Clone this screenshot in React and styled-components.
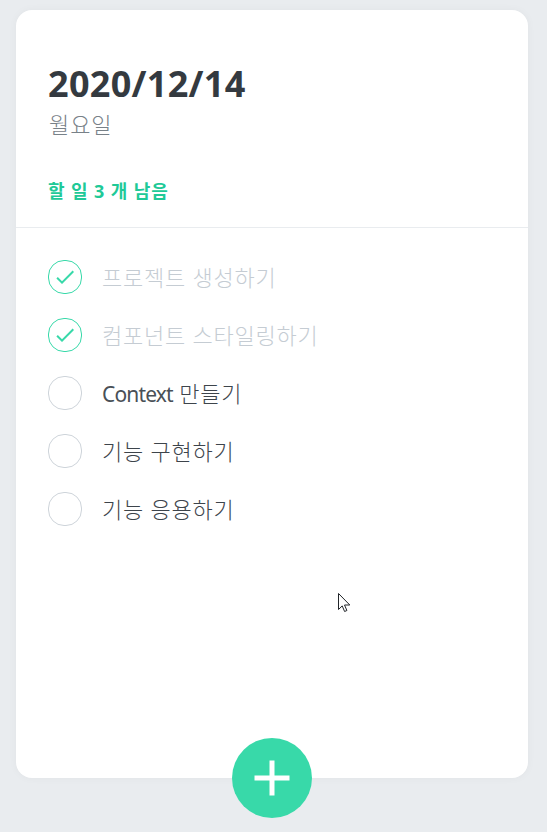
import React from 'react';
import styled, { createGlobalStyle, css } from 'styled-components';
import { MdDone, MdAdd } from 'react-icons/md';

const GlobalStyle = createGlobalStyle`
  * { box-sizing: border-box; }
  body {
    margin: 0;
    background: #e9ecef;
    font-family: "Open Sans", "Noto Sans CJK KR", sans-serif;
  }
`;

const Stage = styled.div`
  height: 832px;
  overflow: hidden;
  padding: 10px 0 0 16px;
  position: relative;
`;

const Template = styled.main`
  width: 512px;
  height: 768px;
  position: relative;
  background: white;
  border-radius: 16px;
  box-shadow: 0 0 8px rgba(0, 0, 0, 0.04);
  display: flex;
  flex-direction: column;
`;

const Head = styled.header`
  height: 218px;
  padding: 48px 32px 24px;
  border-bottom: 1px solid #e9ecef;
`;

const DateTitle = styled.h1`
  margin: 0;
  font-family: "Noto Sans", sans-serif;
  font-size: 36px;
  line-height: 52px;
  letter-spacing: 0.3px;
  font-weight: 700;
  color: #343a40;
`;

const Day = styled.div`
  padding-left: 1px;
  font-size: 22px;
  line-height: 28px;
  letter-spacing: 0.9px;
  font-weight: 300;
  color: #788188;
`;

const TasksLeft = styled.div`
  margin-top: 41px;
  font-size: 18px;
  line-height: 24px;
  letter-spacing: 0.9px;
  font-weight: 700;
  color: #20c997;
`;

const List = styled.ul`
  flex: 1;
  margin: 0;
  padding: 20px 32px 48px;
  list-style: none;
`;

const Item = styled.li`
  display: flex;
  align-items: center;
  height: 58px;
`;

const Check = styled.button`
  width: 34px;
  height: 34px;
  padding: 0;
  margin-right: 20px;
  border-radius: 16px;
  border: 1px solid #ced4da;
  background: none;
  display: flex;
  align-items: center;
  justify-content: center;
  font-size: 24px;
  color: #38d9a9;
  ${(p) => p.$done && css`border-color: #38d9a9;`}
`;

const Label = styled.span`
  font-size: 22px;
  line-height: 28px;
  font-weight: 300;
  letter-spacing: 0.75px;
  white-space: nowrap;
  color: ${(p) => (p.$done ? '#c5ccd3' : '#3d444b')};
`;

const Latin = styled.span`
  font-family: "Noto Sans", sans-serif;
  font-size: 21px;
  font-weight: 400;
  letter-spacing: -0.85px;
  color: #495057;
`;

const AddButton = styled.button`
  position: absolute;
  left: 50%;
  bottom: 0;
  transform: translate(-50%, 50%);
  width: 80px;
  height: 80px;
  padding: 0;
  border: 0;
  border-radius: 50%;
  background: #38d9a9;
  color: white;
  font-size: 60px;
  display: flex;
  align-items: center;
  justify-content: center;
`;

const Cursor = styled.svg`
  position: absolute;
  left: 338px;
  top: 592px;
`;

const todos = [
  { id: 1, text: '프로젝트 생성하기', done: true },
  { id: 2, text: '컴포넌트 스타일링하기', done: true },
  { id: 3, latin: 'Context', text: ' 만들기', done: false },
  { id: 4, text: '기능 구현하기', done: false },
  { id: 5, text: '기능 응용하기', done: false },
];

export default function App() {
  return (
    <Stage>
      <GlobalStyle />
      <Template>
        <Head>
          <DateTitle>2020/12/14</DateTitle>
          <Day>월요일</Day>
          <TasksLeft>할 일 3 개 남음</TasksLeft>
        </Head>
        <List>
          {todos.map((t) => (
            <Item key={t.id}>
              <Check $done={t.done}>{t.done && <MdDone />}</Check>
              <Label $done={t.done}>
                {t.latin && <Latin>{t.latin}</Latin>}
                {t.text}
              </Label>
            </Item>
          ))}
        </List>
        <AddButton><MdAdd /></AddButton>
      </Template>
      <Cursor width="13" height="21" viewBox="0 0 13 21">
        <path d="M.5 1.5v16l3.7-3.6 2.4 5.6 2.3-1-2.4-5.5h5.3z" fill="white" stroke="#212529" />
      </Cursor>
    </Stage>
  );
}
